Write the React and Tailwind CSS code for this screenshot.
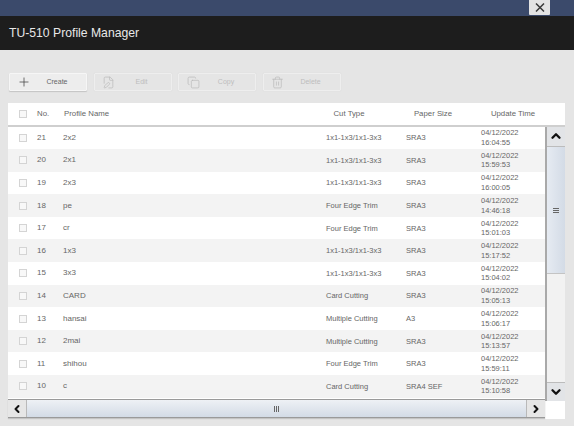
import React from 'react';
import { Plus, FilePen, Copy, Trash2, ChevronUp, ChevronDown, ChevronLeft, ChevronRight } from 'lucide-react';

const PROFILES = [
  { no: 21, name: '2x2', cut: '1x1-1x3/1x1-3x3', paper: 'SRA3', time: '16:04:55' },
  { no: 20, name: '2x1', cut: '1x1-1x3/1x1-3x3', paper: 'SRA3', time: '15:59:53' },
  { no: 19, name: '2x3', cut: '1x1-1x3/1x1-3x3', paper: 'SRA3', time: '16:00:05' },
  { no: 18, name: 'pe', cut: 'Four Edge Trim', paper: 'SRA3', time: '14:46:18' },
  { no: 17, name: 'cr', cut: 'Four Edge Trim', paper: 'SRA3', time: '15:01:03' },
  { no: 16, name: '1x3', cut: '1x1-1x3/1x1-3x3', paper: 'SRA3', time: '15:17:52' },
  { no: 15, name: '3x3', cut: '1x1-1x3/1x1-3x3', paper: 'SRA3', time: '15:04:02' },
  { no: 14, name: 'CARD', cut: 'Card Cutting', paper: 'SRA3', time: '15:05:13' },
  { no: 13, name: 'hansai', cut: 'Multiple Cutting', paper: 'A3', time: '15:06:17' },
  { no: 12, name: '2mai', cut: 'Multiple Cutting', paper: 'SRA3', time: '15:13:57' },
  { no: 11, name: 'shihou', cut: 'Four Edge Trim', paper: 'SRA3', time: '15:59:11' },
  { no: 10, name: 'c', cut: 'Card Cutting', paper: 'SRA4 SEF', time: '15:10:58' },
];

const Checkbox = () => (
  <span className="block w-[8px] h-[8px] border border-[#d4d4d4] bg-[#f8f8f8]" />
);

const ToolButton = ({ icon: Icon, label, disabled }) => (
  <div
    className={`flex items-center w-[78px] h-[18px] rounded-[1px] border ${
      disabled
        ? 'border-[#eeeeee] bg-[#e5e5e5] text-[#bdbdbd] shadow-[0_0_1px_#d4d4d4]'
        : 'border-[#f6f6f6] bg-[#ededed] text-[#666666] shadow-[0_1px_1px_#c4c4c4]'
    }`}
  >
    <span className="flex justify-center w-[28px]">
      <Icon
        size={disabled ? 13 : 14}
        strokeWidth={1.3}
        className={disabled ? 'text-[#b9b9b9]' : 'text-[#444444]'}
      />
    </span>
    <span className="w-[38px] text-center text-[7px]">{label}</span>
  </div>
);

export default function App() {
  return (
    <div className="w-[574px] h-[426px] overflow-hidden flex flex-col bg-[#e5e5e5] font-['Liberation_Sans',Arial,sans-serif] text-[#666666]">
      {/* window bar */}
      <div className="h-[16px] shrink-0 flex justify-end pr-[24px] bg-[#3b4a6b]">
        <div className="w-[21px] h-[15px] flex items-center justify-center bg-[#e3e3e3] rounded-b-[1px]">
          <svg width="10" height="9" viewBox="0 0 10 9" className="text-[#3a3a3a]">
            <path d="M1 0.5 L9 8.5 M9 0.5 L1 8.5" stroke="currentColor" strokeWidth="1.5" />
          </svg>
        </div>
      </div>

      <div className="h-[34px] shrink-0 flex items-center pl-[9px] bg-[#1d1d1d] text-[#e8e8e8] text-[12.2px]">
        TU-510 Profile Manager
      </div>

      {/* toolbar */}
      <div className="flex gap-[6.5px] pl-[9px] pt-[23px] h-[53px] shrink-0">
        <ToolButton icon={Plus} label="Create" />
        <ToolButton icon={FilePen} label="Edit" disabled />
        <ToolButton icon={Copy} label="Copy" disabled />
        <ToolButton icon={Trash2} label="Delete" disabled />
      </div>

      <div className="ml-[8px] w-[557px] h-[316px] flex flex-col bg-white">
        {/* header */}
        <div className="h-[23.5px] shrink-0 flex items-center border-b-2 border-[#cfcfcf] text-[7.8px]">
          <span className="w-[29px] flex justify-center pl-[1px]"><Checkbox /></span>
          <span className="w-[27px]">No.</span>
          <span className="w-[246px]">Profile Name</span>
          <span className="w-[78px] text-center">Cut Type</span>
          <span className="w-[90px] text-center">Paper Size</span>
          <span className="w-[70px] text-center">Update Time</span>
        </div>

        <div className="flex">
          <div className="w-[537px]">
            {/* rows */}
            <div className="h-[272.5px] overflow-hidden">
              {PROFILES.map((p, i) => (
                <div
                  key={p.no}
                  className={`h-[22.6px] flex items-center text-[7.5px] ${i % 2 ? 'bg-[#f3f3f3]' : 'bg-white'}`}
                >
                  <span className="w-[29px] flex justify-center pl-[1px]"><Checkbox /></span>
                  <span className="w-[26px] text-[8px]">{p.no}</span>
                  <span className="w-[263px] text-[8px]">{p.name}</span>
                  <span className="w-[80px]">{p.cut}</span>
                  <span className="w-[75px]">{p.paper}</span>
                  <span className="leading-[9.5px]">04/12/2022<br />{p.time}</span>
                </div>
              ))}
            </div>

            {/* horizontal scrollbar */}
            <div className="h-[19px] flex items-center border-t border-[#9a9a9a] border-b bg-gradient-to-b from-[#eef1f5] to-[#d3dbe6] shadow-[0_1px_1px_#c4c4c4]">
              <span className="w-[19px] h-full flex items-center justify-center bg-[#e6e6e6] border-r border-[#b9b9b9]">
                <ChevronLeft size={12} strokeWidth={4} className="text-[#111111]" />
              </span>
              <span className="flex-1 flex justify-center">
                <span className="w-[6px] h-[6px] bg-[repeating-linear-gradient(90deg,#666666_0,#666666_1px,transparent_1px,transparent_2px)]" />
              </span>
              <span className="w-[19px] h-full flex items-center justify-center bg-[#e6e6e6] border-l border-[#b9b9b9]">
                <ChevronRight size={12} strokeWidth={4} className="text-[#111111]" />
              </span>
            </div>
          </div>

          {/* vertical scrollbar */}
          <div className="w-[20px] h-[274px] flex flex-col border-l-2 border-[#a9a9a9] bg-[#f2f2f2]">
            <span className="h-[20px] shrink-0 flex items-center justify-center bg-[#e2e4e7] border-b border-[#bcbcbc]">
              <ChevronUp size={14} strokeWidth={4} className="text-[#111111]" />
            </span>
            <span className="h-[127px] shrink-0 flex items-center justify-center bg-gradient-to-r from-[#e6ebf2] to-[#d3dbe6] border-b border-[#c4c4c4]">
              <span className="w-[6px] h-[6px] bg-[repeating-linear-gradient(0deg,#666666_0,#666666_1px,transparent_1px,transparent_2px)]" />
            </span>
            <span className="flex-1" />
            <span className="h-[19px] shrink-0 flex items-center justify-center bg-[#e2e4e7] border-t border-[#bcbcbc]">
              <ChevronDown size={14} strokeWidth={4} className="text-[#111111]" />
            </span>
          </div>
        </div>
      </div>
    </div>
  );
}
